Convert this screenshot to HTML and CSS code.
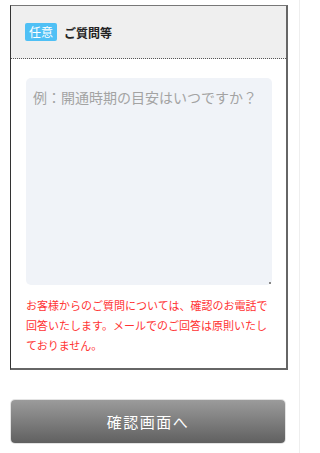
FILE: index.html
```html
<!DOCTYPE html>
<html lang="ja">
<head>
<meta charset="utf-8">
<title>ご質問等</title>
<link rel="stylesheet" href="styles.css">
</head>
<body>
<div class="page">
  <div class="box">
    <div class="box-head">
      <span class="badge">任意</span>
      <span class="title">ご質問等</span>
    </div>
    <div class="box-body">
      <div class="field-wrap">
        <textarea class="field" placeholder="例：開通時期の目安はいつですか？"></textarea>
      </div>
      <p class="note">お客様からのご質問については、確認のお電話で回答いたします。メールでのご回答は原則いたしておりません。</p>
    </div>
  </div>
  <div class="actions">
    <button class="btn" type="button">確認画面へ</button>
  </div>
</div>
</body>
</html>
```
FILE: styles.css
```css
html, body {
  margin: 0;
  padding: 0;
  background: #fff;
}
body {
  font-family: "Noto Sans CJK JP", "Noto Sans", sans-serif;
  color: #222;
}
.page {
  width: 300px;
  min-height: 453px;
  box-sizing: border-box;
  border-right: 1px solid #eee;
  padding: 5px 11px 0 10px;
}
.box {
  border-left: 1px solid #333;
  border-top: 1px solid #777;
  border-right: 2px solid #666;
  border-bottom: 2px solid #666;
}
.box-head {
  height: 52px;
  background: #efefef;
  border-bottom: 1px dotted #555;
  display: flex;
  align-items: center;
  gap: 7px;
  padding-left: 14px;
}
.badge {
  display: inline-block;
  width: 32px;
  height: 18px;
  line-height: 18px;
  text-align: center;
  background: #4fc0f5;
  color: #fff;
  font-size: 12px;
  border-radius: 2px;
}
.title {
  font-size: 12px;
  font-weight: bold;
  color: #222;
}
.box-body {
  padding: 19px 14px 13px 15px;
}
.field-wrap {
  position: relative;
}
.field-wrap::after {
  content: "";
  position: absolute;
  right: 1px;
  bottom: 1px;
  width: 2px;
  height: 2px;
  background: #888;
}
.field {
  display: block;
  width: 100%;
  height: 207px;
  box-sizing: border-box;
  border: none;
  outline: none;
  background: #f0f3f8;
  border-radius: 5px;
  padding: 9px 7px;
  font-family: "Noto Sans CJK JP", "Noto Sans", sans-serif;
  font-size: 14px;
  color: #333;
  resize: none;
}
.field::placeholder {
  color: #a3a3a3;
}
.note {
  margin: 10px 0 0;
  font-size: 11px;
  line-height: 20px;
  color: #f33;
}
.actions {
  padding: 30px 3px 0 1px;
}
.btn {
  display: block;
  width: 100%;
  height: 43px;
  border: none;
  border-radius: 4px;
  box-shadow: 0 0 0 1px #e3e3e3;
  background: linear-gradient(#9b9b9b, #606060);
  color: #fff;
  font-family: "Noto Sans CJK JP", "Noto Sans", sans-serif;
  font-size: 15px;
  letter-spacing: 1.5px;
  cursor: pointer;
}
```
